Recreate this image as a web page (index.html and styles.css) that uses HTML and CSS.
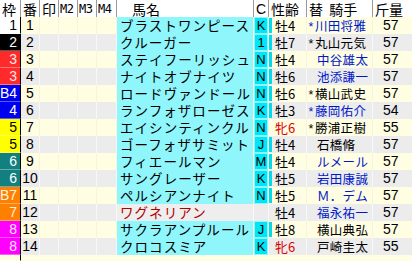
FILE: index.html
```html
<!DOCTYPE html>
<html lang="ja">
<head>
<meta charset="utf-8">
<link rel="stylesheet" href="styles.css">
</head>
<body>
<div class="table">
  <div class="row head">
    <div class="c">枠</div><div class="c">番</div><div class="c">印</div><div class="c mono">M2</div><div class="c mono">M3</div><div class="c mono">M4</div>
    <div class="c hname">馬名</div><div class="c hc">C</div><div class="c">性齢</div><div class="c hjockey">替&nbsp;&nbsp;騎手</div><div class="c">斤量</div>
  </div>

  <div class="row odd">
    <div class="waku w1">1</div><div class="num">1</div><div class="m"></div><div class="m"></div><div class="m"></div><div class="m"></div>
    <div class="name">ブラストワンピース</div><div class="cc"><span class="cbox">K</span></div><div class="sex bar">牡4</div><div class="jockey blue"><span class="star">*</span>川田将雅</div><div class="kin">57</div>
  </div>
  <div class="row even">
    <div class="waku w2">2</div><div class="num">2</div><div class="m"></div><div class="m"></div><div class="m"></div><div class="m"></div>
    <div class="name">クルーガー</div><div class="cc"><span class="cbox">1</span></div><div class="sex bar">牡7</div><div class="jockey"><span class="star">*</span>丸山元気</div><div class="kin">57</div>
  </div>
  <div class="row odd">
    <div class="waku w3">3</div><div class="num">3</div><div class="m"></div><div class="m"></div><div class="m"></div><div class="m"></div>
    <div class="name">ステイフーリッシュ</div><div class="cc"><span class="cbox">N</span></div><div class="sex bar">牡4</div><div class="jockey blue nostar">中谷雄太</div><div class="kin">57</div>
  </div>
  <div class="row even">
    <div class="waku w3">3</div><div class="num">4</div><div class="m"></div><div class="m"></div><div class="m"></div><div class="m"></div>
    <div class="name">ナイトオブナイツ</div><div class="cc"><span class="cbox">N</span></div><div class="sex bar">牡6</div><div class="jockey blue nostar">池添謙一</div><div class="kin">57</div>
  </div>
  <div class="row odd">
    <div class="waku w4">B4</div><div class="num">5</div><div class="m"></div><div class="m"></div><div class="m"></div><div class="m"></div>
    <div class="name">ロードヴァンドール</div><div class="cc"><span class="cbox">N</span></div><div class="sex bar">牡6</div><div class="jockey"><span class="star">*</span>横山武史</div><div class="kin">57</div>
  </div>
  <div class="row even">
    <div class="waku w4">4</div><div class="num">6</div><div class="m"></div><div class="m"></div><div class="m"></div><div class="m"></div>
    <div class="name">ランフォザローゼス</div><div class="cc"><span class="cbox">K</span></div><div class="sex bar">牡3</div><div class="jockey blue"><span class="star">*</span>藤岡佑介</div><div class="kin">54</div>
  </div>
  <div class="row odd">
    <div class="waku w5">5</div><div class="num">7</div><div class="m"></div><div class="m"></div><div class="m"></div><div class="m"></div>
    <div class="name">エイシンティンクル</div><div class="cc"><span class="cbox">N</span></div><div class="sex mare">牝6</div><div class="jockey"><span class="star">*</span>勝浦正樹</div><div class="kin">55</div>
  </div>
  <div class="row even">
    <div class="waku w5">5</div><div class="num">8</div><div class="m"></div><div class="m"></div><div class="m"></div><div class="m"></div>
    <div class="name">ゴーフォザサミット</div><div class="cc"><span class="cbox">J</span></div><div class="sex bar">牡4</div><div class="jockey nostar">石橋脩</div><div class="kin">57</div>
  </div>
  <div class="row odd">
    <div class="waku w6">6</div><div class="num">9</div><div class="m"></div><div class="m"></div><div class="m"></div><div class="m"></div>
    <div class="name">フィエールマン</div><div class="cc"><span class="cbox">M</span></div><div class="sex bar">牡4</div><div class="jockey blue nostar">ルメール</div><div class="kin">57</div>
  </div>
  <div class="row even">
    <div class="waku w6">6</div><div class="num">10</div><div class="m"></div><div class="m"></div><div class="m"></div><div class="m"></div>
    <div class="name">サングレーザー</div><div class="cc"><span class="cbox">K</span></div><div class="sex bar">牡5</div><div class="jockey blue nostar">岩田康誠</div><div class="kin">57</div>
  </div>
  <div class="row odd">
    <div class="waku w7">B7</div><div class="num">11</div><div class="m"></div><div class="m"></div><div class="m"></div><div class="m"></div>
    <div class="name">ペルシアンナイト</div><div class="cc"><span class="cbox">N</span></div><div class="sex bar">牡5</div><div class="jockey blue nostar">Ｍ．デム</div><div class="kin">57</div>
  </div>
  <div class="row even">
    <div class="waku w7">7</div><div class="num">12</div><div class="m"></div><div class="m"></div><div class="m"></div><div class="m"></div>
    <div class="name off">ワグネリアン</div><div class="cc off"></div><div class="sex">牡4</div><div class="jockey blue nostar">福永祐一</div><div class="kin">57</div>
  </div>
  <div class="row odd">
    <div class="waku w8">8</div><div class="num">13</div><div class="m"></div><div class="m"></div><div class="m"></div><div class="m"></div>
    <div class="name">サクラアンプルール</div><div class="cc"><span class="cbox">J</span></div><div class="sex bar">牡8</div><div class="jockey nostar">横山典弘</div><div class="kin">57</div>
  </div>
  <div class="row even">
    <div class="waku w8">8</div><div class="num">14</div><div class="m"></div><div class="m"></div><div class="m"></div><div class="m"></div>
    <div class="name">クロコスミア</div><div class="cc"><span class="cbox">K</span></div><div class="sex mare">牝6</div><div class="jockey nostar">戸崎圭太</div><div class="kin">55</div>
  </div>
  <div class="row filler">
    <div class="waku"></div>
  </div>
</div>
</body>
</html>
```

FILE: styles.css
```css
* { box-sizing: border-box; }
html, body {
  margin: 0;
  padding: 0;
  background: #fffde4;
}
body {
  width: 412px;
  height: 261px;
  overflow: hidden;
  font-family: "Noto Sans CJK JP", "Noto Sans", sans-serif;
  color: #000;
}
.table {
  display: flex;
  flex-direction: column;
}
.row {
  display: grid;
  grid-template-columns: 21px 19px 19px 19px 19px 20px 137px 15px 38px 66px 39px;
  height: 17px;
}
.row > div {
  height: 17px;
  line-height: 17px;
  font-size: 13px;
  white-space: nowrap;
}
.head {
  background: #ffffff;
}
.head .c {
  font-size: 14px;
  line-height: 19px;
  border-right: 1px solid #9a9a9a;
  padding-left: 2px;
}
.head .c:last-child { border-right: none; }
.head .mono {
  font-family: "DejaVu Sans Mono", monospace;
  font-size: 12px;
  letter-spacing: -0.5px;
  padding-left: 1px;
}
.head .hname { padding-left: 15px; }
.head .hc {
  font-family: "Liberation Sans", sans-serif;
  font-size: 14px;
  padding-left: 2px;
}

.odd { background: #fffde2; }
.even { background: #ececec; }
.odd > div { border-right: 1px solid #f6f4da; }
.even > div { border-right: 1px solid #f8f8f8; }
.row > .kin { border-right: none; }

.waku {
  text-align: right;
  padding-right: 3px;
  color: #fff;
  border-right: 1px solid #000 !important;
  border-bottom: 1px solid rgba(255,255,255,0.35);
  font-family: "Liberation Sans", sans-serif;
  font-size: 14px !important;
}
.w1 { background: #ffffff; color: #000; }
.w2 { background: #000000; color: #fff; }
.w3 { background: #ff2a2a; color: #ffe8e8; }
.w4 { background: #0000f0; color: #ffffff; }
.w5 { background: #ffff00; color: #000; }
.w6 { background: #138080; color: #fff; }
.w7 { background: #ff8000; color: #fff4e0; }
.w8 { background: #ff00ff; color: #ffe8ff; }

.num {
  text-align: center;
  font-family: "Liberation Sans", sans-serif;
  font-size: 14px !important;
}
.name {
  background: #8ff6fc;
  padding-left: 3px;
  font-size: 13.5px !important;
  letter-spacing: 1.05px;
}
.name.off {
  background: #eeeeee;
  color: #b00000;
}
.cc {
  background: #8ff6fc;
  padding: 1px 0 1px 1px;
}
.cc.off { background: #ececec; }
.cbox {
  display: block;
  width: 12px;
  height: 15px;
  line-height: 15px;
  background: #00e6f6;
  text-align: center;
  font-family: "Liberation Sans", sans-serif;
  font-size: 13px;
}
.sex {
  position: relative;
  padding-left: 6px;
}
.sex.bar::before {
  content: "";
  position: absolute;
  left: 0;
  top: 1px;
  width: 3px;
  height: 15px;
  background: #00dcec;
}
.sex.mare { color: #e00000; }
.jockey {
  padding-left: 0;
  font-size: 12.5px !important;
  letter-spacing: 0.3px;
}
.star {
  display: inline-block;
  width: 8px;
  font-family: "Liberation Sans", sans-serif;
  text-align: center;
}
.jockey.nostar { padding-left: 10px; }
.blue { color: #0018c8; }
.kin {
  padding-left: 10px;
  font-family: "Liberation Sans", sans-serif;
  font-size: 14px !important;
}
.filler {
  height: 6px;
  background: #fffde2;
}
.filler > .waku {
  height: 6px;
  background: #fffde2;
}
```
